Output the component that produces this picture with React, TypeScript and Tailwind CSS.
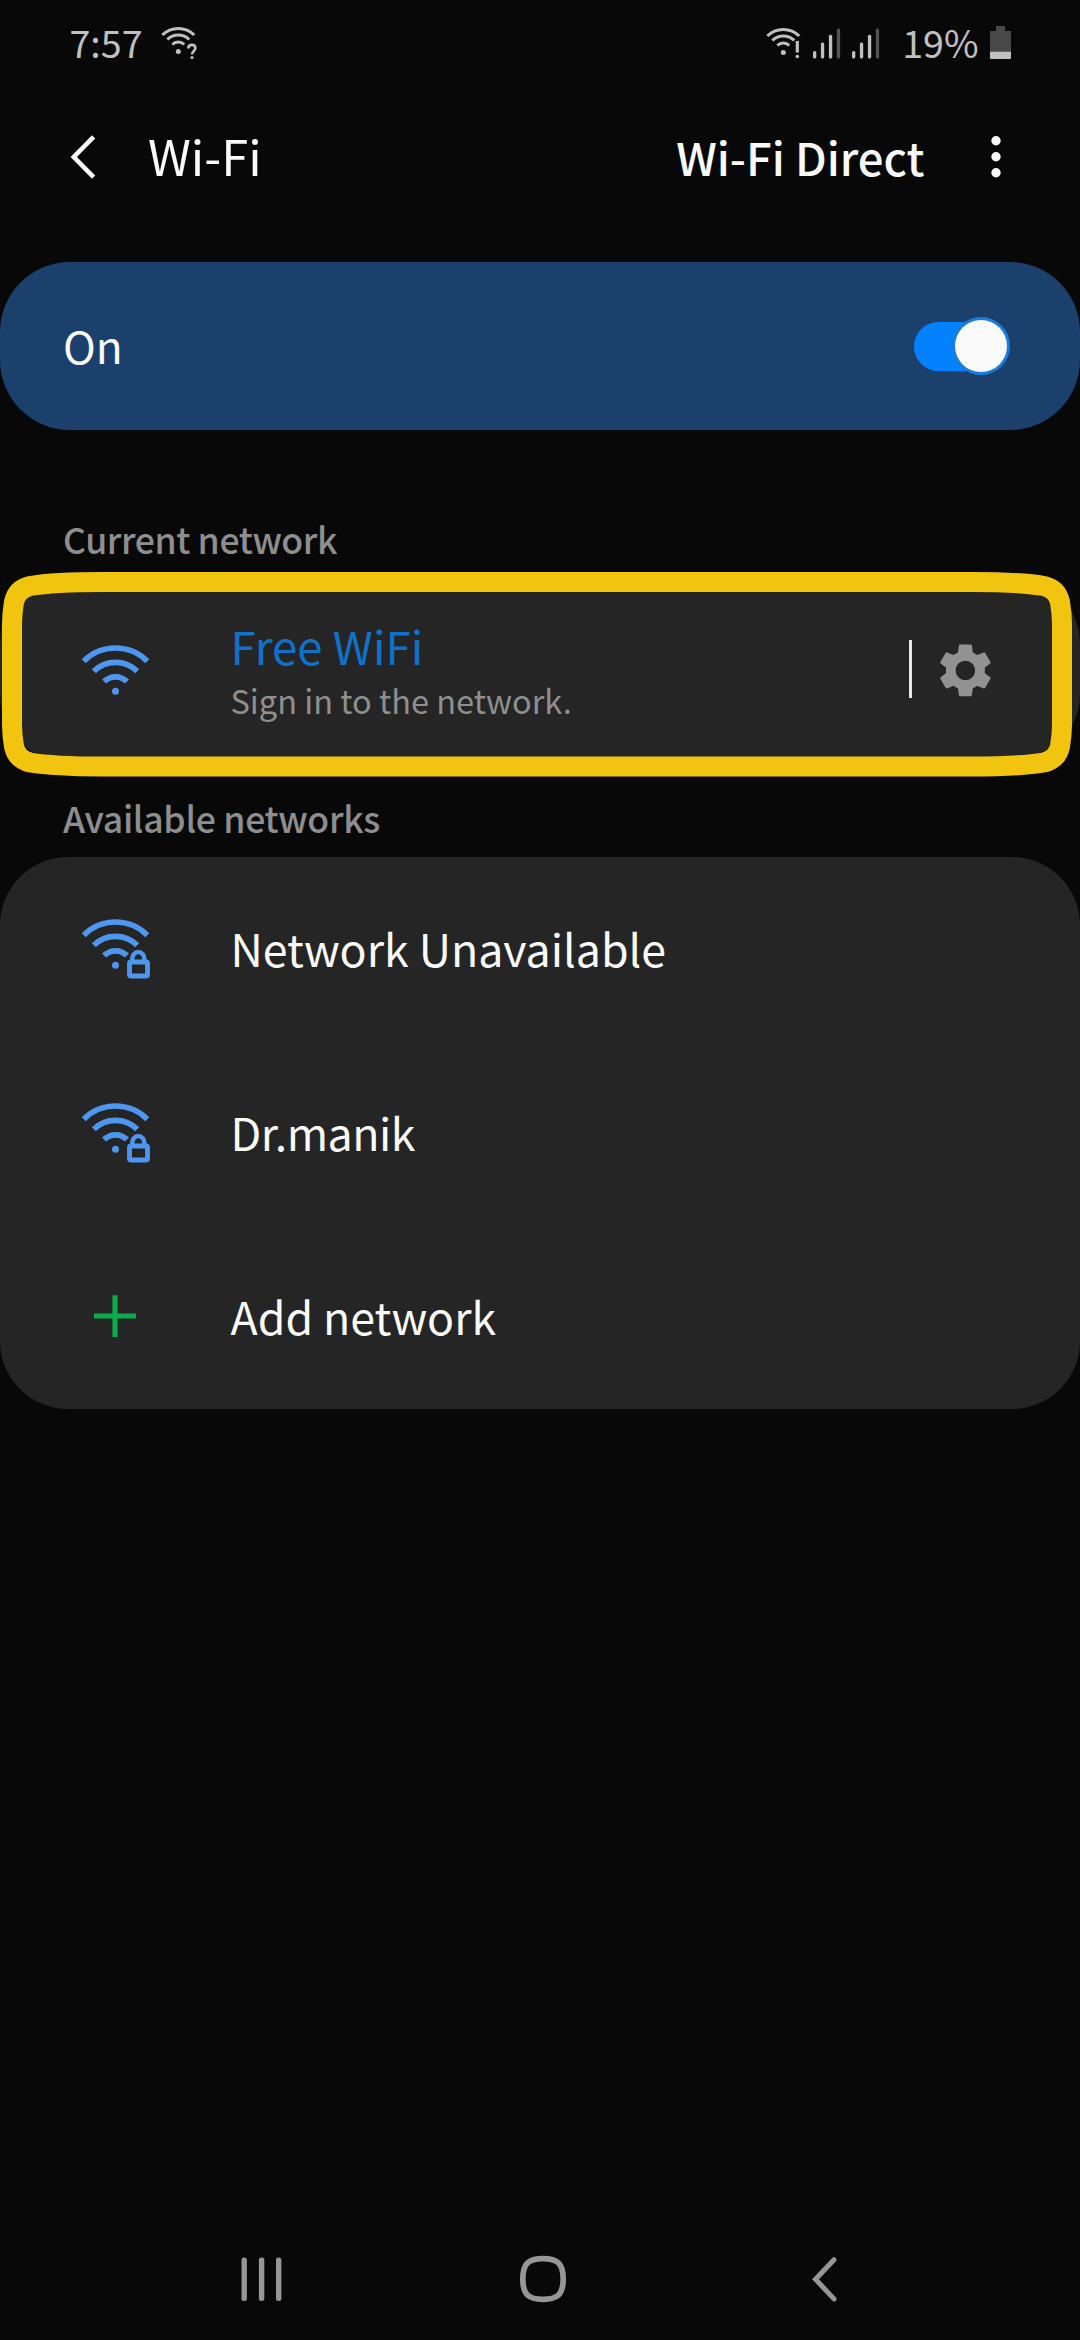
import type { ReactNode } from "react";
import { MdSettings } from "react-icons/md";

/* A quarter arc opening downwards; (x, y) is the centre of its circle. */
function arc(x: number, y: number, r: number) {
  const d = r * 0.707;
  return `M${x - d} ${y - d}A${r} ${r} 0 0 1 ${x + d} ${y - d}`;
}

function StatusWifi({ mark }: { mark: "question" | "alert" }) {
  return (
    <svg width="38" height="36" viewBox="0 0 38 36" fill="none" stroke="#c0c0c0" strokeWidth="3">
      <path d={arc(18.3, 26, 22.6)} />
      <path d={arc(18.3, 25.5, 15.5)} />
      <path d={arc(18.3, 25.4, 8.4)} />
      <circle cx="18.3" cy="26.4" r="2.5" fill="#c0c0c0" stroke="none" />
      {mark === "question" ? (
        <>
          <path d="M28.3 23.4C28.3 20.8 29.9 19.9 32 19.9S35.4 21.2 35.4 23.3C35.4 26 32 26.2 32 29.6" strokeWidth="2.6" />
          <circle cx="32" cy="32.6" r="1.6" fill="#c0c0c0" stroke="none" />
        </>
      ) : (
        <>
          <path d="M32.3 14.9V26.5" strokeWidth="3.2" />
          <circle cx="32.3" cy="30.5" r="1.8" fill="#c0c0c0" stroke="none" />
        </>
      )}
    </svg>
  );
}

function Signal() {
  return (
    <svg width="28" height="32" viewBox="0 0 28 32" fill="#c0c0c0">
      <rect x="0" y="24" width="3.3" height="7.5" rx="1.5" />
      <rect x="7.9" y="15.6" width="3.3" height="15.9" rx="1.5" />
      <rect x="15.9" y="7.7" width="3.3" height="23.8" rx="1.5" />
      <rect x="23.8" y="1.6" width="3.3" height="29.9" rx="1.5" fill="#545454" />
    </svg>
  );
}

function StatusBar() {
  return (
    <div className="flex h-[83px] items-center pr-[69px] pl-[69.5px] text-[37.6px] leading-[83px] text-[#c0c0c0]">
      <span>7:57</span>
      <div className="ml-[17.5px] pt-[2px]">
        <StatusWifi mark="question" />
      </div>
      <div className="ml-auto flex items-center">
        <div className="pt-[4px]">
          <StatusWifi mark="alert" />
        </div>
        <div className="ml-[10px] flex gap-[11px] pt-[3px]">
          <Signal />
          <Signal />
        </div>
        <span className="ml-[22px]">19%</span>
        <svg className="mt-[2px] ml-[11.5px]" width="21" height="33" viewBox="0 0 21 33">
          <path d="M6 0H15V5H21V31.5Q21 33 19.5 33H1.5Q0 33 0 31.5V5H6Z" fill="#484848" />
          <path d="M0 25.7H21V31.5Q21 33 19.5 33H1.5Q0 33 0 31.5Z" fill="#c0c0c0" />
        </svg>
      </div>
    </div>
  );
}

function Header() {
  return (
    <header className="flex h-[145px] items-center pr-[75.5px] pl-[69px] text-[#fafafa]">
      <svg className="mt-[2px]" width="30" height="46" viewBox="0 0 30 46" fill="none" stroke="#fafafa" strokeWidth="4.6">
        <path d="M24.6 2.8L4.8 23L24.6 43.2" />
      </svg>
      <h1 className="ml-[49px] pb-[1px] text-[48.8px] leading-[60px]">Wi-Fi</h1>
      <button className="ml-auto text-[45.4px] leading-[60px] font-medium">Wi-Fi Direct</button>
      <svg className="mt-[2px] ml-[62px]" width="18" height="46" viewBox="0 0 18 46" fill="#fafafa">
        <circle cx="9" cy="6.8" r="4.7" />
        <circle cx="9" cy="22.8" r="4.7" />
        <circle cx="9" cy="38.8" r="4.7" />
      </svg>
    </header>
  );
}

function Toggle() {
  return (
    <div className="relative h-[49px] w-[96px] rounded-full">
      <div className="h-full w-[80px] rounded-full bg-[#0381fe]" />
      <div className="absolute -top-[4.5px] right-0 size-[58px] rounded-full bg-[#1a7ddd] p-[3px]">
        <div className="size-[52px] rounded-full bg-[#fafafa]" />
      </div>
    </div>
  );
}

function WifiIcon({ locked = false }: { locked?: boolean }) {
  return (
    <svg width="72" height="64" viewBox="0 0 72 64" fill="none" stroke="#4d97f0" strokeWidth="5.7">
      <path d={arc(34.5, 50, 45)} />
      <path d={arc(34.5, 50, 30.7)} />
      <path d={arc(34.5, 50, 16.2)} />
      <circle cx="34.5" cy="48.3" r="3.5" fill="#4d97f0" stroke="none" />
      {locked && (
        <>
          <path d="M51.3 43.5V41.5A6 6.5 0 0 1 63.3 41.5V43.5" strokeWidth="4.5" />
          <rect x="48.5" y="45" width="18" height="14" rx="1.5" strokeWidth="4.9" />
        </>
      )}
    </svg>
  );
}

function PlusIcon() {
  return (
    <svg width="72" height="64" viewBox="0 0 72 64" stroke="#0cab4b" strokeWidth="5.2">
      <path d="M13 31H55M34 10.2V52" />
    </svg>
  );
}

function SectionTitle({ children, className }: { children: ReactNode; className: string }) {
  return (
    <div className={`flex items-end pl-[63px] ${className}`}>
      <h2 className="text-[35.6px] leading-[54px] font-medium text-[#8e8e8e]">{children}</h2>
    </div>
  );
}

function Row({ icon, label, className = "" }: { icon: ReactNode; label: string; className?: string }) {
  return (
    <li className="flex h-[184px] items-center pl-[81px]">
      {icon}
      <span className={`ml-[77.5px] pb-[3px] text-[44.7px] leading-[60px] text-[#fafafa] ${className}`}>{label}</span>
    </li>
  );
}

/* Hand-drawn looking highlight frame laid over the current network. */
function HighlightFrame() {
  return (
    <svg className="pointer-events-none absolute -top-[4px] left-0" width="1080" height="206" viewBox="0 0 1080 206" fill="none">
      <path
        d="M102 10H972C1012 10 1032 12 1044 14C1052 16 1058 21 1060 30C1061 36 1062 44 1062 52V152.5C1062 160.5 1061 168.5 1060 174.5C1058 183.5 1052 188.5 1044 190.5C1032 192.5 1012 194.5 972 194.5H102C62 194.5 42 192.5 30 190.5C22 188.5 16 183.5 14 174.5C13 168.5 12 160.5 12 152.5V52C12 44 13 36 14 30C16 21 22 16 30 14C42 12 62 10 102 10Z"
        stroke="#f1c40f"
        strokeWidth="20"
      />
    </svg>
  );
}

function NavBar() {
  return (
    <nav className="mt-auto flex h-[122px] items-center pr-[239px] pl-[238px]">
      <svg width="48" height="48" viewBox="0 0 48 48" fill="#969696">
        <rect x="3.5" y="2.5" width="5.4" height="43.5" rx="2.5" />
        <rect x="20.9" y="2.5" width="5.4" height="43.5" rx="2.5" />
        <rect x="38" y="2.5" width="5.4" height="43.5" rx="2.5" />
      </svg>
      <svg className="ml-[232.5px]" width="48" height="48" viewBox="0 0 48 48" fill="none" stroke="#969696" strokeWidth="5.7">
        <path d="M24 3.7C38.5 3.7 44.2 8.500 44.2 24S38.5 44.3 24 44.3S3.8 39.5 3.8 24S9.5 3.7 24 3.7Z" />
      </svg>
      <svg className="ml-auto" width="30" height="48" viewBox="0 0 30 48" fill="none" stroke="#969696" strokeWidth="5" strokeLinecap="round">
        <path d="M23 4.7L4.5 24.3L23 43.9" />
      </svg>
    </nav>
  );
}

export default function App() {
  return (
    <div className="flex h-[2340px] w-[1080px] flex-col overflow-hidden bg-[#080808] font-['Noto_Sans_CJK_JP','Noto_Sans',sans-serif] whitespace-nowrap">
      <StatusBar />
      <Header />

      <section className="mt-[34px] flex h-[168px] items-center justify-between rounded-[70px] bg-[#1b406b] pr-[70px] pl-[63px]">
        <span className="pb-[3px] text-[44.2px] leading-[60px] text-[#fafafa]">On</span>
        <Toggle />
      </section>

      <SectionTitle className="h-[146px] pb-[10px] tracking-[-0.4px]">Current network</SectionTitle>
      <section className="relative flex h-[186px] items-center rounded-[68px] bg-[#252525] pr-[82.5px] pl-[81px]">
        <div className="pt-[11px]">
          <WifiIcon />
        </div>
        <div className="ml-[77.5px] pt-[7px]">
          <p className="text-[45.5px] leading-[54px] tracking-[0.1px] text-[#0f71ca]">Free WiFi</p>
          <p className="text-[32.5px] leading-[55px] text-[#8f8f8f]">Sign in to the network.</p>
        </div>
        <div className="ml-auto h-[58px] w-[3px] bg-[#e8e8e8]" />
        <MdSettings className="mt-[2px] ml-[21px] size-[64.8px] text-[#929292]" />
        <HighlightFrame />
      </section>

      <SectionTitle className="h-[95px] pb-[12px] tracking-[-0.3px]">Available networks</SectionTitle>
      <ul className="rounded-[68px] bg-[#252525]">
        <Row icon={<WifiIcon locked />} label="Network Unavailable" />
        <Row icon={<WifiIcon locked />} label="Dr.manik" className="tracking-[-0.5px]" />
        <Row icon={<PlusIcon />} label="Add network" />
      </ul>

      <NavBar />
    </div>
  );
}
